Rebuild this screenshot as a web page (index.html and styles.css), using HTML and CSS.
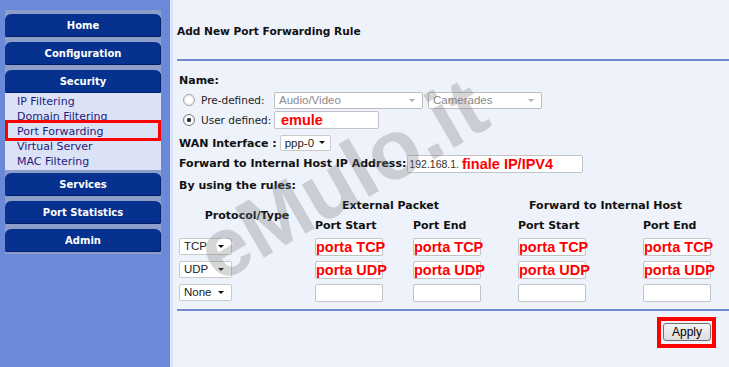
FILE: index.html
```html
<!DOCTYPE html>
<html lang="en"><head>
    <meta charset="UTF-8">
    <meta name="viewport" content="width=device-width, initial-scale=1.0">
    <title>Port Forwarding</title>
    <link rel="stylesheet" href="styles.css">
</head>

<body>
<div class="page">

    <aside class="sidebar">
        <ul class="menu">
            <li class="menu-btn">Home</li>
            <li class="menu-btn">Configuration</li>
            <li class="menu-btn open">Security</li>
            <li class="submenu">
                <a href="#">IP Filtering</a>
                <a href="#">Domain Filtering</a>
                <a href="#" class="active">Port Forwarding</a>
                <a href="#">Virtual Server</a>
                <a href="#">MAC Filtering</a>
            </li>
            <li class="menu-btn">Services</li>
            <li class="menu-btn">Port Statistics</li>
            <li class="menu-btn last">Admin</li>
        </ul>
    </aside>

    <main class="content">
        <h1 class="title">Add New Port Forwarding Rule</h1>
        <div class="divider"></div>

        <form class="pf-form">
            <div class="row bold">Name:</div>
            <div class="row">
                <span class="radio"></span>
                <span class="lbl">Pre-defined:</span>
                <div class="select disabled w-cat">Audio/Video<i class="arrow"></i></div>
                <div class="select disabled w-app">Camerades<i class="arrow"></i></div>
            </div>
            <div class="row">
                <span class="radio checked"></span>
                <span class="lbl">User defined:</span>
                <div class="field w-name"><span class="red">emule</span></div>
            </div>
            <div class="row wan">
                <span class="bold">WAN Interface :</span>
                <div class="select w-wan">ppp-0<i class="arrow dark"></i></div>
            </div>
            <div class="row fwd">
                <span class="bold">Forward to Internal Host IP Address:</span>
                <div class="field w-ip"><span class="ip">192.168.1.</span><span class="red">finale IP/IPV4</span></div>
            </div>
            <div class="row bold using">By using the rules:</div>

            <div class="rules">
                <div class="th proto">Protocol/Type</div>
                <div class="th ext">External Packet</div>
                <div class="th host">Forward to Internal Host</div>
                <div class="th c2">Port Start</div>
                <div class="th c3">Port End</div>
                <div class="th c4">Port Start</div>
                <div class="th c5">Port End</div>

                <div class="select w-proto">TCP<i class="arrow dark"></i></div>
                <div class="field port"><span class="red">porta TCP</span></div>
                <div class="field port"><span class="red">porta TCP</span></div>
                <div class="field port"><span class="red">porta TCP</span></div>
                <div class="field port"><span class="red">porta TCP</span></div>

                <div class="select w-proto">UDP<i class="arrow dark"></i></div>
                <div class="field port"><span class="red">porta UDP</span></div>
                <div class="field port"><span class="red">porta UDP</span></div>
                <div class="field port"><span class="red">porta UDP</span></div>
                <div class="field port"><span class="red">porta UDP</span></div>

                <div class="select w-proto">None<i class="arrow dark"></i></div>
                <div class="field port"></div>
                <div class="field port"></div>
                <div class="field port"></div>
                <div class="field port"></div>
            </div>
        </form>

        <div class="divider bottom"></div>
        <div class="actions">
            <div class="mark"><button type="button" class="apply-btn">Apply</button></div>
        </div>

        <div class="watermark">eMulo.it</div>
    </main>

</div>
</body></html>
```

FILE: styles.css
```css
body {
    margin: 0;
    font-family: "DejaVu Sans", Verdana, sans-serif;
    font-size: 11px;
    color: #111;
    background-color: #eef2fb;
}

.page {
    display: flex;
    min-height: 367px;
}

/* menu a sinistra */
.sidebar {
    width: 173px;
    flex-shrink: 0;
    box-sizing: border-box;
    background-color: #6a8ad9;
    border-right: 3px solid #dce4f7;
    padding-top: 10px;
}

.menu {
    list-style: none;
    margin: 0 0 0 5px;
    padding: 4px 0 2px;
    width: 156px;
    background-color: #8d9ecb;
}

.menu-btn {
    height: 23px;
    line-height: 23px;
    margin-bottom: 5px;
    text-align: center;
    color: #fff;
    font-size: 10px;
    font-weight: bold;
    background-color: #06318f;
    border-radius: 6px 6px 2px 2px;
    box-shadow: inset -1px -1px 0 #021f66;
}

.menu-btn.open {
    margin-bottom: 0;
}

.menu-btn.last {
    margin-bottom: 0;
}

.submenu {
    display: flex;
    flex-direction: column;
    padding: 1px 0 1px;
    margin-bottom: 3px;
    background-color: #dce2f6;
}

.submenu a {
    position: relative;
    display: block;
    line-height: 15px;
    padding-left: 12px;
    color: #1c1c7c;
    text-decoration: none;
}

.submenu a.active::after {
    content: "";
    position: absolute;
    top: -4px;
    bottom: -2px;
    left: 0;
    right: 0;
    border: 3px solid #f00;
}

/* contenuto */
.content {
    flex: 1;
    position: relative;
    padding: 24px 0 0 4px;
    overflow: hidden;
}

.title {
    margin: 0;
    font-size: 10.6px;
    line-height: 14px;
    font-weight: bold;
}

.divider {
    height: 0;
    margin-top: 21px;
    border-top: 2px solid #7089cd;
}

.divider.bottom {
    margin-top: 5px;
}

.pf-form {
    margin-top: 9px;
    padding-left: 2px;
}

.row {
    display: flex;
    align-items: center;
    height: 20px;
}

.row.wan {
    margin-top: 2px;
    height: 22px;
}

.row.fwd {
    height: 19px;
}

.row.using {
    margin-top: 2px;
}

.bold {
    font-weight: bold;
}

.lbl {
    flex-shrink: 0;
    width: 73px;
    margin-left: 6px;
    font-size: 10.5px;
    white-space: nowrap;
    color: #222;
}

.radio {
    flex-shrink: 0;
    width: 10px;
    height: 10px;
    margin-left: 4px;
    border: 1px solid #a8a8a8;
    border-radius: 50%;
    background: radial-gradient(circle, #fff 30%, #e2e2e2 100%);
}

.radio.checked {
    border-color: #7a7a7a;
    background: radial-gradient(circle, #222 0, #333 25%, #fff 35%, #e8e8e8 100%);
}

/* controlli */
.select {
    position: relative;
    flex-shrink: 0;
    box-sizing: border-box;
    height: 17px;
    line-height: 15px;
    padding-left: 4px;
    border: 1px solid #c9c9c9;
    border-radius: 2px;
    background-color: #fff;
    font-family: "Liberation Sans", Arial, sans-serif;
    font-size: 11.5px;
    color: #222;
}

.select.disabled {
    color: #8a8a8a;
    border-color: #bdbdbd;
}

.arrow {
    position: absolute;
    right: 7px;
    top: 6px;
    border-left: 3px solid transparent;
    border-right: 3px solid transparent;
    border-top: 3px solid #b0b0b0;
}

.arrow.dark {
    border-top-color: #111;
}

.w-cat { width: 149px; }
.w-app { width: 114px; margin-left: 5px; }
.w-wan { width: 51px; height: 16px; margin-left: 3px; }
.w-wan .arrow { right: 5px; top: 5px; }
.w-proto { width: 53px; }

.field {
    flex-shrink: 0;
    box-sizing: border-box;
    height: 18px;
    border: 1px solid #c3c3c3;
    border-radius: 2px;
    background-color: #fff;
    white-space: nowrap;
    display: flex;
    align-items: center;
}

.w-name {
    width: 105px;
    padding-left: 6px;
}

.w-ip {
    width: 176px;
    margin-left: 1px;
    padding-left: 1px;
}

.red {
    font-family: "Liberation Sans", Arial, sans-serif;
    font-weight: bold;
    font-size: 14.5px;
    color: #f00;
}

.ip {
    font-family: "Liberation Sans", Arial, sans-serif;
    font-size: 10.5px;
    color: #333;
    margin-right: 3px;
}

/* tabella regole */
.rules {
    display: grid;
    grid-template-columns: 136px 98px 105px 125px 1fr;
    grid-template-rows: 20px 20px 23px 23px 23px;
    align-items: center;
    justify-items: start;
}

.th {
    font-weight: bold;
}

.proto {
    grid-column: 1;
    grid-row: 1 / 3;
    justify-self: center;
}

.ext {
    grid-column: 2 / 4;
    grid-row: 1;
    margin-left: 27px;
}

.host {
    grid-column: 4 / 6;
    grid-row: 1;
    margin-left: 11px;
}

.c2 { grid-column: 2; grid-row: 2; }
.c3 { grid-column: 3; grid-row: 2; }
.c4 { grid-column: 4; grid-row: 2; }
.c5 { grid-column: 5; grid-row: 2; }

.field.port {
    width: 68px;
    overflow: visible;
}

/* pulsante */
.actions {
    display: flex;
    justify-content: flex-end;
    padding: 6px 13px 0 0;
}

.mark {
    border: 4px solid #f00;
    padding: 2px 1px 3px 2px;
}

.apply-btn {
    width: 48px;
    height: 18px;
    padding: 0;
    border: 1px solid #707070;
    border-radius: 3px;
    background: linear-gradient(#f4f4f4, #dedede);
    font-family: "Liberation Sans", Arial, sans-serif;
    font-size: 12px;
    color: #000;
}

.watermark {
    position: absolute;
    left: 52px;
    top: 211px;
    line-height: 84px;
    font-family: "Liberation Sans", Arial, sans-serif;
    font-weight: bold;
    font-size: 84px;
    color: rgba(120, 120, 120, 0.3);
    transform: rotate(-30deg);
    transform-origin: 0 100%;
    pointer-events: none;
    white-space: nowrap;
}
```
